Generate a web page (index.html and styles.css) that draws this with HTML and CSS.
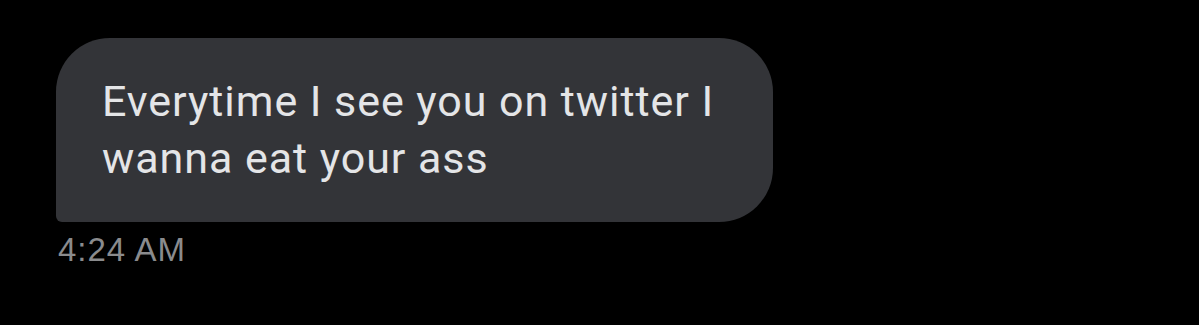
FILE: index.html
```html
<!DOCTYPE html>
<html lang="en">
<head>
  <meta charset="UTF-8">
  <meta name="viewport" content="width=device-width, initial-scale=1.0">
  <title>Message</title>
  <link rel="stylesheet" href="styles.css">
</head>
<body>
  <div class="thread">
    <div class="message">
      <div class="bubble">Everytime I see you on twitter I wanna eat your ass</div>
      <div class="time">4:24 AM</div>
    </div>
  </div>
</body>
</html>
```

FILE: styles.css
```css
html, body {
  background: #000;
}
body {
  margin: 0;
  font-family: Roboto, "Noto Sans", sans-serif;
}
.thread {
  padding: 38px 0 0 56px;
}
.message {
  display: flex;
  flex-direction: column;
  align-items: flex-start;
}
.bubble {
  width: 717px;
  box-sizing: border-box;
  padding: 35px 40px 35px 46px;
  background: #333438;
  color: #e4e5e7;
  font-size: 43px;
  line-height: 57px;
  letter-spacing: 0.95px;
  border-radius: 54px 54px 54px 6px;
}
.time {
  margin-top: 8px;
  padding-left: 2px;
  font-family: "Liberation Sans", Arial, sans-serif;
  font-size: 33px;
  line-height: 40px;
  letter-spacing: 1px;
  color: #8a8b8d;
}
```
